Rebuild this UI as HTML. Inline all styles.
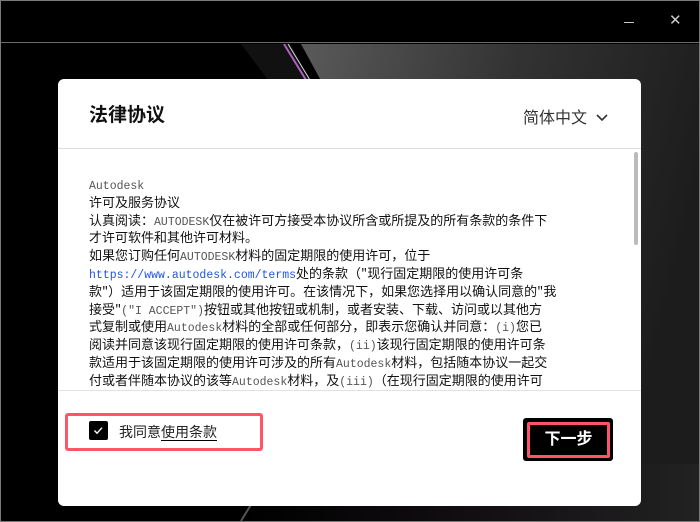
<!DOCTYPE html>
<html><head><meta charset="utf-8"><style>
*{margin:0;padding:0;box-sizing:border-box}
body{width:700px;height:522px;overflow:hidden;background:#000;font-family:"Liberation Sans","Noto Sans CJK SC",sans-serif;position:relative}
.frame{position:absolute;inset:0;border:1px solid #7a7a7a}
.tb{position:absolute;left:1px;right:1px;top:1px;height:42px;background:#000;border-bottom:1px solid #6a6a6a}
.bgs{position:absolute;left:1px;top:44px}
.dlg{position:absolute;left:58px;top:79px;width:583px;height:427px;background:#fff;border-radius:6px}
h1{position:absolute;left:31px;top:21px;font-size:19px;font-weight:bold;color:#111}
.lang{position:absolute;left:465px;top:25px;font-size:16px;color:#333}
.sep{position:absolute;left:0;right:0;height:1px;background:#ddd}
.txt{position:absolute;left:31px;top:96px;width:535px;height:215px;overflow:hidden;font-size:13px;color:#111;font-family:"Noto Sans CJK SC",sans-serif}
.txt div{height:17.8px;line-height:17.8px;white-space:nowrap}
.m{font-family:"Liberation Mono",monospace;color:#555;font-size:11.5px;line-height:10px}
.m a{color:#2255dd;text-decoration:none}
.sb{position:absolute;left:576px;top:73px;width:4px;height:93px;background:#bbb;border-radius:2px}
.red{position:absolute;left:7px;top:334px;width:198px;height:38px;border:3px solid #ff5566;border-radius:3px}
.cb{position:absolute;left:31px;top:342px;width:19px;height:19px;background:#000;border-radius:2px}
.lbl{position:absolute;left:61px;top:343px;font-size:14px;color:#222}
.lbl u{text-decoration:none;border-bottom:1px solid #000}
.btn{position:absolute;left:465px;top:339px;width:90px;height:43px;background:#000;border-radius:3px}
.btn div{position:absolute;left:4px;top:4px;right:3px;bottom:3px;border:3px solid #ff5566;border-radius:2px;color:#fff;font-weight:bold;font-size:16px;text-align:center;line-height:30px}
</style></head><body>
<svg class="bgs" width="698" height="477" viewBox="0 0 698 477">
<defs><linearGradient id="g" x1="0" y1="0" x2="1" y2="0.3"><stop offset="0" stop-color="#5a5a5a"/><stop offset="0.5" stop-color="#333"/><stop offset="1" stop-color="#1c1c1c"/></linearGradient>
<linearGradient id="d" x1="0" y1="0" x2="1" y2="0"><stop offset="0" stop-color="#000"/><stop offset="0.5" stop-color="#120e12"/><stop offset="1" stop-color="#222"/></linearGradient></defs>
<rect width="698" height="477" fill="#000"/>
<polygon points="300,0 698,0 698,477 560,477" fill="url(#g)"/>
<polygon points="240,0 290,0 330,80 300,80" fill="#111"/>
<line x1="283" y1="0" x2="305" y2="36" stroke="#b060c0" stroke-width="2"/>
<line x1="287" y1="0" x2="309" y2="36" stroke="#ddd" stroke-width="1"/>
<rect x="240" y="420" width="458" height="57" fill="url(#d)"/>
<line x1="240" y1="477" x2="275" y2="420" stroke="#555" stroke-width="2"/>
</svg>
<div class="tb">
<div style="position:absolute;left:623px;top:21px;width:10px;height:1px;background:#ccc"></div>
<div style="position:absolute;left:668px;top:10px;color:#ccc;font-size:15px;font-family:'Liberation Sans'">✕</div>
</div>
<div class="frame"></div>
<div class="dlg">
<h1>法律协议</h1>
<div class="lang">简体中文 <svg width="14" height="10" viewBox="0 0 14 10" style="margin-left:4px"><path d="M2 2l5 5 5-5" stroke="#333" stroke-width="1.6" fill="none"/></svg></div>
<div class="sep" style="top:69px"></div>
<div class="txt">
<div><span class="m">Autodesk</span></div>
<div>许可及服务协议</div>
<div>认真阅读：<span class="m">AUTODESK</span>仅在被许可方接受本协议所含或所提及的所有条款的条件下</div>
<div>才许可软件和其他许可材料。</div>
<div>如果您订购任何<span class="m">AUTODESK</span>材料的固定期限的使用许可，位于</div>
<div><span class="m"><a>https://www.autodesk.com/terms</a></span>处的条款（"现行固定期限的使用许可条</div>
<div>款"）适用于该固定期限的使用许可。在该情况下，如果您选择用以确认同意的"我</div>
<div>接受"<span class="m">("I ACCEPT")</span>按钮或其他按钮或机制，或者安装、下载、访问或以其他方</div>
<div>式复制或使用<span class="m">Autodesk</span>材料的全部或任何部分，即表示您确认并同意：<span class="m">(i)</span>您已</div>
<div>阅读并同意该现行固定期限的使用许可条款，<span class="m">(ii)</span>该现行固定期限的使用许可条</div>
<div>款适用于该固定期限的使用许可涉及的所有<span class="m">Autodesk</span>材料，包括随本协议一起交</div>
<div>付或者伴随本协议的该等<span class="m">Autodesk</span>材料，及<span class="m">(iii)</span>（在现行固定期限的使用许可</div>
</div>
<div class="sb"></div>
<div class="sep" style="top:311px;background:#e2e2e2"></div>
<div class="red"></div>
<div class="cb"><svg width="19" height="19" viewBox="0 0 19 19"><path d="M5.5 9.5l2.5 2.7 5-5.5" stroke="#fff" stroke-width="1.4" fill="none"/></svg></div>
<div class="lbl">我同意<u>使用条款</u></div>
<div class="btn"><div>下一步</div></div>
</div>
</body></html>
